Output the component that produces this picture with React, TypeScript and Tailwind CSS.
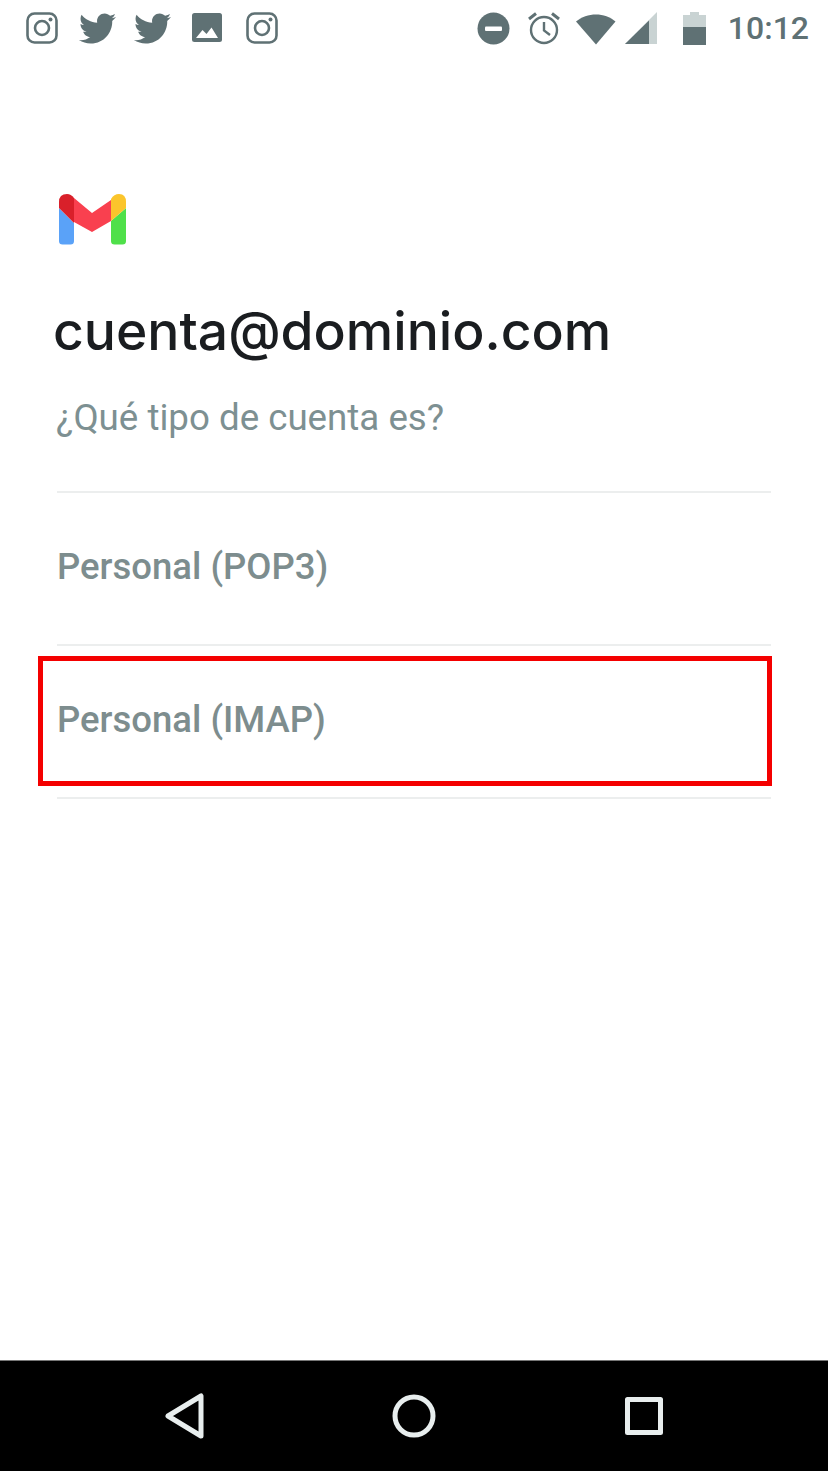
import React from "react";
import { FaTwitter } from "react-icons/fa";

const iconColor = "#5f7174";

function InstagramIcon() {
  return (
    <svg width="32" height="32" viewBox="0 0 32 32" fill="none" stroke={iconColor}>
      <rect x="1.5" y="1.5" width="29" height="29" rx="7" strokeWidth="2.6" />
      <circle cx="16" cy="16" r="7" strokeWidth="2.6" />
      <circle cx="24.5" cy="7.5" r="2" fill={iconColor} stroke="none" />
    </svg>
  );
}

function ImageIcon() {
  return (
    <svg width="30" height="30" viewBox="0 0 30 30">
      <rect width="30" height="29" rx="2.5" fill={iconColor} />
      <path d="M4 25 L10.5 17 L14.5 21 L19.5 14.5 L26 25 Z" fill="#fff" />
    </svg>
  );
}

function StatusLeft() {
  return (
    <div className="flex items-center">
      <div className="ml-[26px]"><InstagramIcon /></div>
      <FaTwitter className="ml-[21px] w-[37px] h-[37px]" style={{ color: iconColor }} />
      <FaTwitter className="ml-[18px] w-[37px] h-[37px]" style={{ color: iconColor }} />
      <div className="ml-[21px]"><ImageIcon /></div>
      <div className="ml-[24px]"><InstagramIcon /></div>
    </div>
  );
}

function StatusRight() {
  return (
    <div className="flex items-center">
      <svg width="33" height="33" viewBox="0 0 33 33">
        <circle cx="16.5" cy="16.5" r="16" fill={iconColor} />
        <rect x="8" y="14.5" width="17" height="4.5" rx="1" fill="#fff" />
      </svg>
      <svg className="ml-[17px]" width="34" height="34" viewBox="0 0 34 34" fill="none" stroke={iconColor} strokeWidth="2.4">
        <circle cx="17" cy="19" r="13" />
        <path d="M17 11 V19.5 L23 24" />
        <path d="M2 8 L9 2.5 M32 8 L25 2.5" strokeWidth="3" />
      </svg>
      <svg className="ml-[15px]" width="40" height="33" viewBox="0 0 40 33">
        <path d="M0 9.5 C11 0 29 0 39.5 9.5 L20 32.5 Z" fill={iconColor} />
      </svg>
      <svg className="ml-[9px]" width="33" height="33" viewBox="0 0 33 33">
        <path d="M0 32 L32 0 V32 Z" fill="#c9d3d3" />
        <path d="M0 32 L24 8.5 V32 Z" fill={iconColor} />
      </svg>
      <svg className="ml-[25px]" width="23" height="33" viewBox="0 0 23 33">
        <path d="M7 0 H16 V3 H23 V15 H0 V3 H7 Z" fill="#c9d3d3" />
        <rect y="15" width="23" height="18" fill={iconColor} />
      </svg>
      <span className="ml-[22px] mr-[19px] font-['Roboto',sans-serif] font-medium text-[32px] leading-none text-[#5f7174]">10:12</span>
    </div>
  );
}

function GmailLogo() {
  return (
    <svg width="67" height="51" viewBox="0 0 67 51" fill="none">
      <path d="M0 14 L15 29 V47 Q15 50.5 11.5 50.5 H3.5 Q0 50.5 0 47 Z" fill="#5aa2f8" />
      <path d="M52 27 L67 14 V47 Q67 50.5 63.5 50.5 H55.5 Q52 50.5 52 47 Z" fill="#4fe04a" />
      <path d="M15 4 L33 19 L52 6 V27 L33 38 L15 28 Z" fill="#f9404f" />
      <path d="M0 14 V8 Q0 0 8 0 Q12 0 15 4 V29 Z" fill="#d9202a" />
      <path d="M52 5 Q55 0 60 0 Q67 0 67 8 V14 L52 27 Z" fill="#fbc52c" />
    </svg>
  );
}

function AccountOption({ label, selected }: { label: string; selected?: boolean }) {
  return (
    <div className="relative h-[153px] ml-[57px] mr-[57px] pb-[2px] flex items-center border-b-2 border-[#eceeee]">
      {selected && (
        <div className="absolute left-[-19px] right-[-1px] top-[10px] h-[130px] border-[5px] border-[#f40000]" />
      )}
      <span className="font-['Roboto',sans-serif] font-medium text-[36.5px] text-[#7d8d8e]">{label}</span>
    </div>
  );
}

export default function App() {
  return (
    <div className="flex flex-col w-[828px] h-[1471px] bg-white overflow-hidden">
      <div className="flex justify-between items-center h-[56px]">
        <StatusLeft />
        <StatusRight />
      </div>

      <div className="flex-1">
        <div className="flex ml-[59px] mt-[138px] h-[51px]">
          <GmailLogo />
        </div>
        <h1 className="ml-[53px] mt-[50px] font-['Inter',sans-serif] font-[450] text-[53.4px] leading-[72px] text-[#1a1d20]">
          cuenta@dominio.com
        </h1>
        <p className="ml-[56px] mt-[29px] font-['Roboto',sans-serif] text-[36.7px] leading-[44px] text-[#7d9092]">
          ¿Qué tipo de cuenta es?
        </p>
        <div className="mt-[51px] mx-[57px] border-b-2 border-[#eceeee]" />
        <AccountOption label="Personal (POP3)" />
        <AccountOption label="Personal (IMAP)" selected />
      </div>

      {/* Navigation bar */}
      <div className="h-[111px] bg-black flex items-center border-t border-[#777] text-[#e8eeee]">
        <svg className="ml-[165px]" width="40" height="46" viewBox="0 0 40 46" fill="none" stroke="currentColor" strokeWidth="5" strokeLinejoin="round">
          <path d="M36 3 V43 L3 23 Z" />
        </svg>
        <svg className="ml-[187px]" width="44" height="44" viewBox="0 0 44 44" fill="none" stroke="currentColor" strokeWidth="5">
          <circle cx="22" cy="22" r="19" />
        </svg>
        <svg className="ml-[189px]" width="38" height="38" viewBox="0 0 38 38" fill="none" stroke="currentColor" strokeWidth="5" strokeLinejoin="round">
          <rect x="2.5" y="2.5" width="33" height="33" />
        </svg>
      </div>
    </div>
  );
}
